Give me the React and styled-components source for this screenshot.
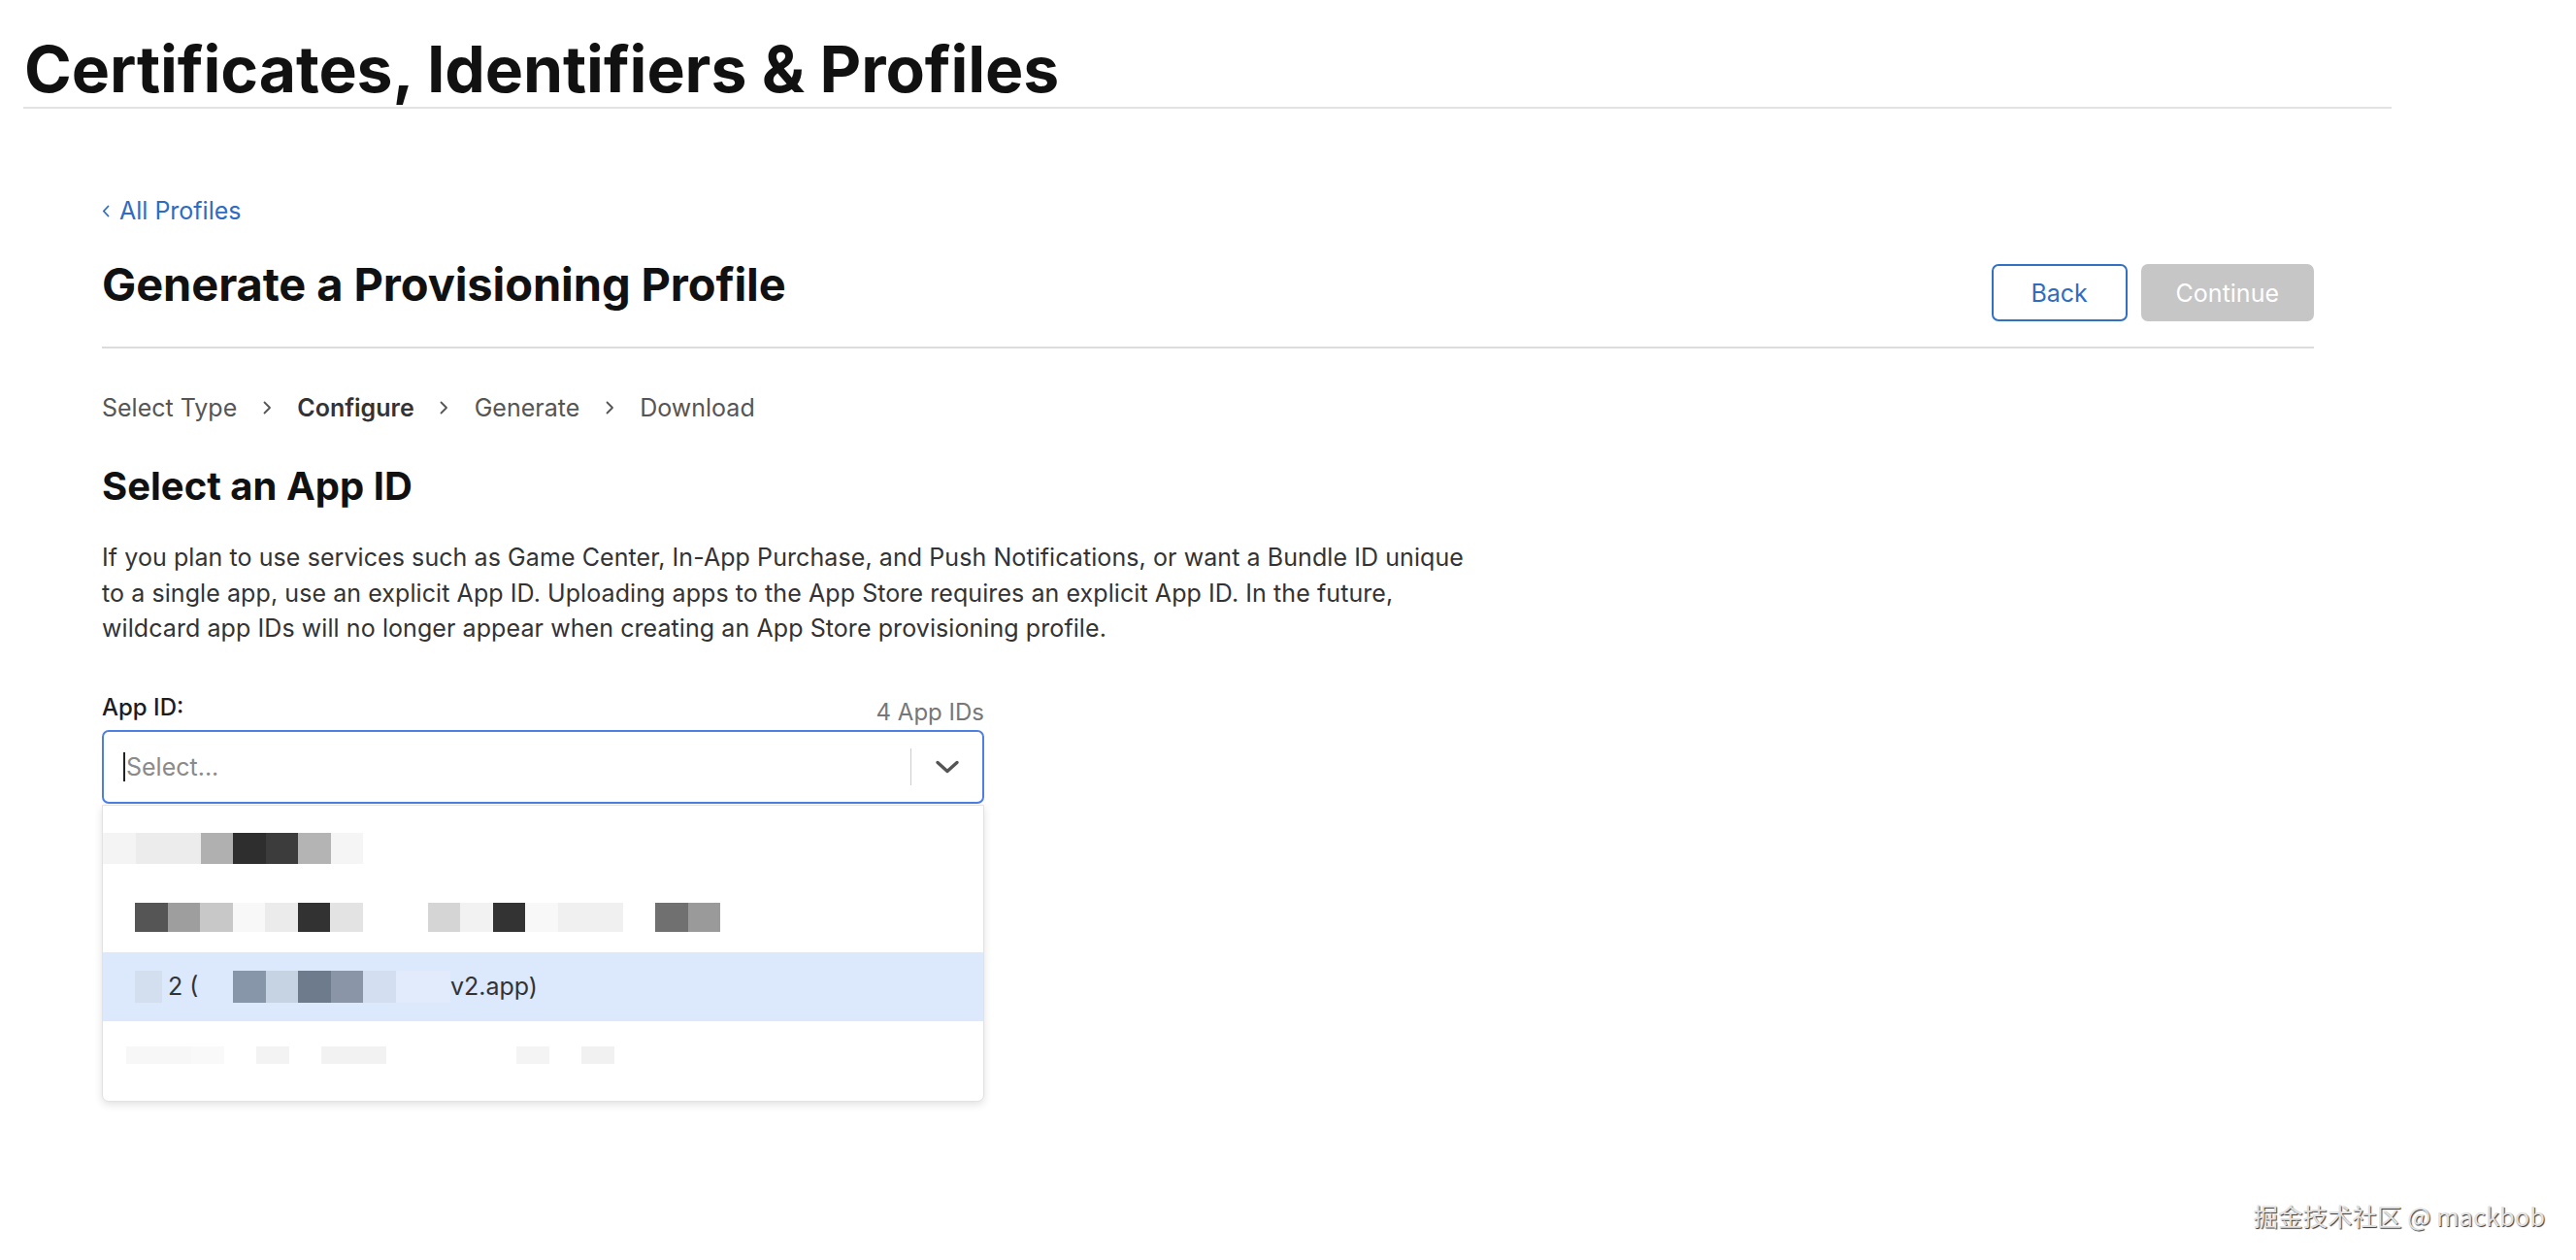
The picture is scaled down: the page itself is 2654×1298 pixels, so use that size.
import React from "react";
import styled, { createGlobalStyle } from "styled-components";

const GlobalStyle = createGlobalStyle`
  html, body { margin: 0; padding: 0; background: #ffffff; }
  body {
    font-family: Inter, "Noto Sans", "Liberation Sans", sans-serif;
    color: #1d1d1f;
    -webkit-font-smoothing: antialiased;
  }
  * { box-sizing: border-box; }
`;

const Page = styled.div`
  position: relative;
  min-height: 1298px;
  width: 2654px;
`;

const Header = styled.header`
  width: 2440px;
  margin-left: 24px;
  padding-top: 32px;
  border-bottom: 2px solid #e3e3e3;
`;

const SiteTitle = styled.h1`
  margin: 0 0 0 1px;
  font-size: 66px;
  line-height: 78px;
  font-weight: 700;
  letter-spacing: -0.1px;
  color: #111111;
`;

const Main = styled.main`
  width: 2279px;
  margin-left: 105px;
  padding-top: 90px;
`;

const BackLink = styled.a`
  display: inline-flex;
  align-items: center;
  gap: 10px;
  font-size: 25px;
  line-height: 30px;
  color: #2f6cc1;
  text-decoration: none;
  cursor: pointer;
`;

const TitleRow = styled.div`
  display: flex;
  justify-content: space-between;
  align-items: flex-start;
  margin-top: 34px;
  padding-bottom: 26px;
  border-bottom: 2px solid #dcdcdc;
`;

const PageTitle = styled.h2`
  margin: 0;
  font-size: 47px;
  line-height: 54px;
  font-weight: 700;
  letter-spacing: -0.1px;
  color: #111111;
`;

const Actions = styled.div`
  display: flex;
  gap: 14px;
  margin-top: 6px;
`;

const Button = styled.button`
  height: 59px;
  min-width: 140px;
  padding: 0 34px;
  border-radius: 7px;
  font-family: inherit;
  font-size: 25px;
  font-weight: 400;
  border: 2px solid ${(p) => (p.$primary ? "#c6c6c6" : "#3270c4")};
  background: ${(p) => (p.$primary ? "#c6c6c6" : "#ffffff")};
  color: ${(p) => (p.$primary ? "#ffffff" : "#2f6cc1")};
  cursor: ${(p) => (p.$primary ? "default" : "pointer")};
`;

const Steps = styled.ol`
  display: flex;
  align-items: center;
  gap: 26.5px;
  list-style: none;
  margin: 46px 0 0;
  padding: 0;
`;

const Step = styled.li`
  font-size: 25px;
  line-height: 30px;
  color: ${(p) => (p.$active ? "#333333" : "#555555")};
  font-weight: ${(p) => (p.$active ? 600 : 400)};
`;

const StepArrow = styled.li`
  display: flex;
  align-items: center;
  height: 30px;
  color: #555555;
`;

const SectionTitle = styled.h3`
  margin: 42px 0 0;
  font-size: 40px;
  line-height: 48px;
  font-weight: 700;
  letter-spacing: 0;
  color: #111111;
`;

const Description = styled.p`
  margin: 31px 0 0;
  max-width: 1425px;
  font-size: 25px;
  line-height: 36.5px;
  letter-spacing: 0.08px;
  color: #333333;
`;

const Field = styled.div`
  width: 909px;
  margin-top: 48px;
`;

const LabelRow = styled.div`
  display: flex;
  justify-content: space-between;
  align-items: flex-end;
`;

const Label = styled.label`
  font-size: 24px;
  line-height: 30px;
  font-weight: 500;
  color: #1d1d1f;
  margin-bottom: 5px;
`;

const Count = styled.span`
  font-size: 24px;
  line-height: 30px;
  color: #777777;
`;

const SelectBox = styled.div`
  margin-top: 3px;
  height: 76px;
  display: flex;
  align-items: center;
  border: 2px solid #4d7fe2;
  border-radius: 7px;
  background: #ffffff;
`;

const SelectValue = styled.div`
  flex: 1;
  display: flex;
  align-items: center;
  padding-left: 20px;
  font-size: 25px;
  color: #8a8a8a;
`;

const Caret = styled.span`
  width: 2px;
  height: 30px;
  background: #222222;
  margin-right: 1px;
`;

const Separator = styled.span`
  width: 1px;
  height: 38px;
  background: #cccccc;
`;

const Toggle = styled.span`
  width: 73px;
  display: flex;
  align-items: center;
  justify-content: center;
  color: #555555;
`;

const Menu = styled.div`
  margin-top: 1px;
  padding: 9px 0 11px;
  border: 1px solid #e2e2e2;
  border-radius: 0 0 7px 7px;
  background: #ffffff;
  box-shadow: 0 3px 8px rgba(0, 0, 0, 0.12);
`;

const Option = styled.div`
  height: 71px;
  display: flex;
  align-items: center;
  padding-left: ${(p) => p.$indent || 0}px;
  background: ${(p) => (p.$highlight ? "#dce8fc" : "transparent")};
  font-size: 25px;
  color: #333333;
`;

const Mosaic = styled.span`
  display: inline-flex;
  align-items: flex-end;
  margin-left: ${(p) => p.$offset || 0}px;
`;

const Cell = styled.span`
  display: inline-block;
  width: ${(p) => p.$w || 33.5}px;
  height: ${(p) => p.$h}px;
  background: ${(p) => p.$c || "transparent"};
`;

const OptionText = styled.span`
  margin-left: ${(p) => p.$offset || 0}px;
  white-space: pre;
`;

const Watermark = styled.div`
  position: absolute;
  right: 32px;
  bottom: 30px;
  font-family: "Noto Sans CJK SC", Inter, sans-serif;
  font-size: 25.5px;
  line-height: 32px;
  color: #e2e2e2;
  text-shadow: 1px 1px 1px rgba(0, 0, 0, 0.8), -1px -1px 0 rgba(255, 255, 255, 0.9);
`;

const Chevron = ({ w = 9, h = 14, stroke = 1.8 }) => (
  <svg width={w} height={h} viewBox="0 0 9 14" fill="none">
    <path d="M1.5 1.5 L7 7 L1.5 12.5" stroke="currentColor" strokeWidth={stroke} strokeLinecap="round" strokeLinejoin="round" />
  </svg>
);

const BackChevron = () => (
  <svg width="8" height="13" viewBox="0 0 8 13" fill="none">
    <path d="M6.5 1.5 L1.8 6.5 L6.5 11.5" stroke="currentColor" strokeWidth="1.8" strokeLinecap="round" strokeLinejoin="round" />
  </svg>
);

const DownChevron = () => (
  <svg width="26" height="14" viewBox="0 0 26 14" fill="none">
    <path d="M3 2.5 L13 11.5 L23 2.5" stroke="currentColor" strokeWidth="3.4" strokeLinecap="round" strokeLinejoin="round" />
  </svg>
);

const row1 = ["#f4f4f4", "#ececec", "#ececec", "#b0b0b0", "#2e2e2e", "#3c3c3c", "#b4b4b4", "#f5f5f5"];
const row2 = [
  "#555555", "#9e9e9e", "#c8c8c8", "#f8f8f8", "#ebebeb", "#323232", "#e3e3e3",
  null, null, "#d5d5d5", "#f2f2f2", "#333333", "#f8f8f8", "#f0f0f0", "#f0f0f0",
  null, "#707070", "#9a9a9a",
];
const row3 = ["#8796a8", "#c6d3e3", "#6e7b8c", "#8a96a8", "#d3dff0"];
const row4 = [
  "#f7f7f7", "#f7f7f7", "#f9f9f9", null, "#f3f3f3", null, "#f2f2f2", "#f2f2f2",
  null, null, null, null, "#f4f4f4", null, "#f1f1f1",
];

export default function App() {
  return (
    <Page>
      <GlobalStyle />
      <Header>
        <SiteTitle>Certificates, Identifiers &amp; Profiles</SiteTitle>
      </Header>
      <Main>
        <BackLink>
          <BackChevron />
          All Profiles
        </BackLink>
        <TitleRow>
          <PageTitle>Generate a Provisioning Profile</PageTitle>
          <Actions>
            <Button>Back</Button>
            <Button $primary disabled>Continue</Button>
          </Actions>
        </TitleRow>
        <Steps>
          <Step>Select Type</Step>
          <StepArrow><Chevron /></StepArrow>
          <Step $active>Configure</Step>
          <StepArrow><Chevron /></StepArrow>
          <Step>Generate</Step>
          <StepArrow><Chevron /></StepArrow>
          <Step>Download</Step>
        </Steps>
        <SectionTitle>Select an App ID</SectionTitle>
        <Description>
          If you plan to use services such as Game Center, In-App Purchase, and Push Notifications, or want a Bundle ID unique
          to a single app, use an explicit App ID. Uploading apps to the App Store requires an explicit App ID. In the future,
          wildcard app IDs will no longer appear when creating an App Store provisioning profile.
        </Description>
        <Field>
          <LabelRow>
            <Label>App ID:</Label>
            <Count>4 App IDs</Count>
          </LabelRow>
          <SelectBox>
            <SelectValue>
              <Caret />
              Select...
            </SelectValue>
            <Separator />
            <Toggle><DownChevron /></Toggle>
          </SelectBox>
          <Menu>
            <Option>
              <Mosaic>
                {row1.map((c, i) => <Cell key={i} $c={c} $h={32} />)}
              </Mosaic>
            </Option>
            <Option $indent={33}>
              <Mosaic>
                {row2.map((c, i) => <Cell key={i} $c={c} $h={30} />)}
              </Mosaic>
            </Option>
            <Option $highlight $indent={33}>
              <Cell $c="#d3deef" $w={28} $h={33} />
              <OptionText $offset={6}>2 (</OptionText>
              <Mosaic $offset={36}>
                {row3.map((c, i) => <Cell key={i} $c={c} $h={33} />)}
                <Cell $c="#e2ebfc" $w={56} $h={33} />
              </Mosaic>
              <OptionText>v2.app)</OptionText>
            </Option>
            <Option $indent={24}>
              <Mosaic>
                {row4.map((c, i) => <Cell key={i} $c={c} $h={18} />)}
              </Mosaic>
            </Option>
          </Menu>
        </Field>
      </Main>
      <Watermark>掘金技术社区 @ mackbob</Watermark>
    </Page>
  );
}
